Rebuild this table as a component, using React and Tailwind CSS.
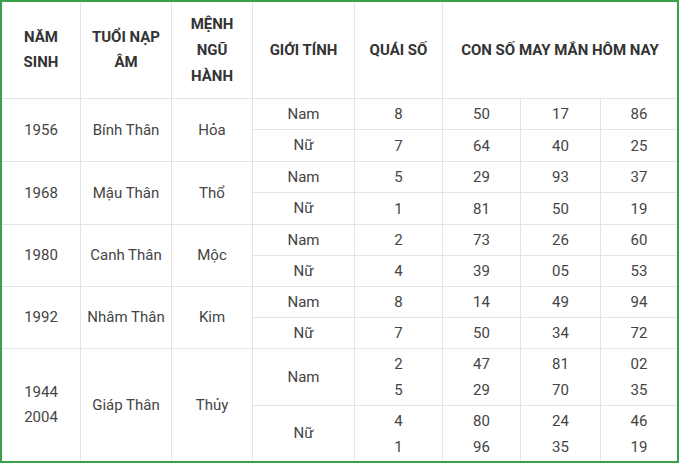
import React from "react";

const groups = [
  { year: ["1956"], tuoi: "Bính Thân", menh: "Hỏa", rows: [
    { g: "Nam", q: ["8"], n: [["50"], ["17"], ["86"]] },
    { g: "Nữ", q: ["7"], n: [["64"], ["40"], ["25"]] },
  ]},
  { year: ["1968"], tuoi: "Mậu Thân", menh: "Thổ", rows: [
    { g: "Nam", q: ["5"], n: [["29"], ["93"], ["37"]] },
    { g: "Nữ", q: ["1"], n: [["81"], ["50"], ["19"]] },
  ]},
  { year: ["1980"], tuoi: "Canh Thân", menh: "Mộc", rows: [
    { g: "Nam", q: ["2"], n: [["73"], ["26"], ["60"]] },
    { g: "Nữ", q: ["4"], n: [["39"], ["05"], ["53"]] },
  ]},
  { year: ["1992"], tuoi: "Nhâm Thân", menh: "Kim", rows: [
    { g: "Nam", q: ["8"], n: [["14"], ["49"], ["94"]] },
    { g: "Nữ", q: ["7"], n: [["50"], ["34"], ["72"]] },
  ]},
  { year: ["1944", "2004"], tuoi: "Giáp Thân", menh: "Thủy", last: true, rows: [
    { g: "Nam", q: ["2", "5"], n: [["47", "29"], ["81", "70"], ["02", "35"]] },
    { g: "Nữ", q: ["4", "1"], n: [["80", "96"], ["24", "35"], ["46", "19"]] },
  ]},
];

function Cell({ children, className = "", lines = false }) {
  return (
    <div className={"flex flex-col items-center justify-center text-center border-[#e4e4e4] " + className}>
      {children}
    </div>
  );
}

function Lines({ items }) {
  return items.map((t, i) => (
    <div key={i} className="leading-[26px]">{t}</div>
  ));
}

export default function App() {
  const cells = [];
  let rowStart = 2;
  groups.forEach((grp, gi) => {
    const isLast = gi === groups.length - 1;
    const rs = rowStart;
    cells.push(
      <Cell key={`y${gi}`} className={(isLast ? "" : "border-b ") + "border-r"} >
        <div style={{ gridRow: `${rs} / span 2` }} />
      </Cell>
    );
    rowStart += 2;
  });

  return (
    <div className="w-[680px] h-[464px] bg-white">
      <div
        className="w-[679px] h-[463px] border-2 border-[#38a14a] text-[15px] text-[#444]"
        style={{ fontFamily: "Roboto, 'Noto Sans', sans-serif" }}
      >
        <div className="grid grid-cols-[79px_91px_81px_102px_88px_78px_80px_76px] grid-rows-[97px_31px_32px_31px_32px_31px_31px_31px_31px_57px_55px]">
          {/* header */}
          <div className="col-start-1 row-start-1 flex flex-col items-center justify-center border-r border-b border-[#e4e4e4] font-bold text-[#333] leading-[25px]">
            <div>NĂM</div>
            <div>SINH</div>
          </div>
          <div className="col-start-2 row-start-1 flex flex-col items-center justify-center border-r border-b border-[#e4e4e4] font-bold text-[#333] leading-[25px]">
            <div>TUỔI NẠP</div>
            <div>ÂM</div>
          </div>
          <div className="col-start-3 row-start-1 flex flex-col items-center justify-center border-r border-b border-[#e4e4e4] font-bold text-[#333] leading-[26px]">
            <div>MỆNH</div>
            <div>NGŨ</div>
            <div>HÀNH</div>
          </div>
          <div className="col-start-4 row-start-1 flex items-center justify-center border-r border-b border-[#e4e4e4] font-bold text-[#333]">
            GIỚI TÍNH
          </div>
          <div className="col-start-5 row-start-1 flex items-center justify-center border-r border-b border-[#e4e4e4] font-bold text-[#333]">
            QUÁI SỐ
          </div>
          <div className="col-start-6 col-span-3 row-start-1 flex items-center justify-center border-b border-[#e4e4e4] font-bold text-[#333]">
            CON SỐ MAY MẮN HÔM NAY
          </div>

          {groups.map((grp, gi) => {
            const isLast = gi === groups.length - 1;
            const r = 2 + gi * 2;
            const bb = isLast ? "" : " border-b";
            return (
              <React.Fragment key={gi}>
                <div
                  className={"col-start-1 flex flex-col items-center justify-center border-r border-[#e4e4e4] leading-[25px]" + bb}
                  style={{ gridRow: `${r} / span 2` }}
                >
                  {grp.year.map((y) => <div key={y}>{y}</div>)}
                </div>
                <div
                  className={"col-start-2 flex items-center justify-center border-r border-[#e4e4e4]" + bb}
                  style={{ gridRow: `${r} / span 2` }}
                >
                  {grp.tuoi}
                </div>
                <div
                  className={"col-start-3 flex items-center justify-center border-r border-[#e4e4e4]" + bb}
                  style={{ gridRow: `${r} / span 2` }}
                >
                  {grp.menh}
                </div>
                {grp.rows.map((row, ri) => {
                  const rowB = isLast && ri === 1 ? "" : " border-b";
                  const rr = r + ri;
                  return (
                    <React.Fragment key={ri}>
                      <div
                        className={"col-start-4 flex items-center justify-center border-r border-[#e4e4e4]" + rowB}
                        style={{ gridRow: `${rr}` }}
                      >
                        {row.g}
                      </div>
                      <div
                        className={"col-start-5 flex flex-col items-center justify-center border-r border-[#e4e4e4]" + rowB}
                        style={{ gridRow: `${rr}` }}
                      >
                        <Lines items={row.q} />
                      </div>
                      {row.n.map((nums, ni) => (
                        <div
                          key={ni}
                          className={
                            "flex flex-col items-center justify-center border-[#e4e4e4]" +
                            (ni < 2 ? " border-r" : "") +
                            rowB +
                            (ni === 0 ? " col-start-6" : ni === 1 ? " col-start-7" : " col-start-8")
                          }
                          style={{ gridRow: `${rr}` }}
                        >
                          <Lines items={nums} />
                        </div>
                      ))}
                    </React.Fragment>
                  );
                })}
              </React.Fragment>
            );
          })}
        </div>
      </div>
    </div>
  );
}
